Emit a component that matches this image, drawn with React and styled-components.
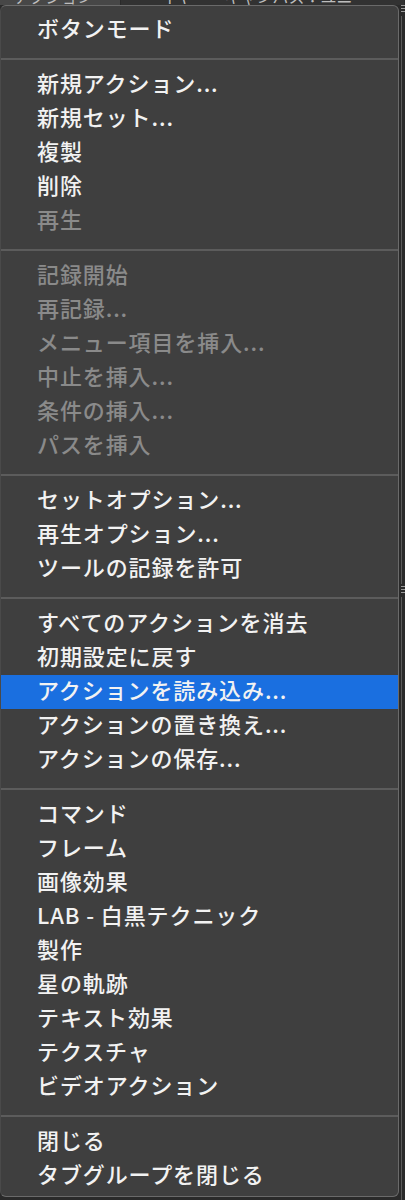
import React from 'react';
import styled, { createGlobalStyle } from 'styled-components';

const GlobalStyle = createGlobalStyle`
  html, body {
    margin: 0;
    padding: 0;
    background: #2a2a2a;
  }
  body {
    font-family: "Noto Sans CJK JP", "Noto Sans", sans-serif;
  }
`;

const Page = styled.div`
  width: 405px;
  height: 1200px;
  overflow: hidden;
  background: #2a2a2a;
  display: flex;
  flex-direction: column;
`;

const TabStrip = styled.div`
  height: 5px;
  overflow: hidden;
  display: flex;
  flex-direction: row;
  background: #323232;
`;

const Tab = styled.div`
  flex: none;
  width: ${(p) => p.width}px;
  height: 5px;
  padding-left: ${(p) => p.indent}px;
  box-sizing: border-box;
  background: ${(p) => (p.active ? '#474747' : '#323232')};
  border-right: 1px solid #2a2a2a;
  color: #bdbdbd;
  font-size: 16px;
  line-height: 16px;
  white-space: nowrap;
  overflow: hidden;
`;

const TabText = styled.div`
  margin-top: -12px;
`;

const Body = styled.div`
  flex: 1;
  display: flex;
  flex-direction: row;
`;

const Menu = styled.div`
  width: 400px;
  height: 1192px;
  box-sizing: border-box;
  background: #3f3f3f;
  border: 1px solid #6a6a6a;
  border-left-color: #4a4a4a;
  border-radius: 6px;
  padding: 7px 0 5px 0;
  display: flex;
  flex-direction: column;
  overflow: hidden;
`;

const Item = styled.div`
  flex: none;
  height: 34px;
  box-sizing: border-box;
  line-height: 29px;
  padding: 0 0 5px 36px;
  font-size: 22px;
  font-weight: 500;
  letter-spacing: 0.9px;
  white-space: nowrap;
  color: ${(p) => (p.disabled ? '#8a8a8a' : '#f2f2f2')};
  background: ${(p) => (p.active ? '#1a6fe0' : 'transparent')};
`;

const Separator = styled.div`
  flex: none;
  height: 2px;
  margin: 11px 0 8px 0;
  background: #5c5c5c;
`;

const SidePanel = styled.div`
  flex: 1;
  display: flex;
  flex-direction: column;
  align-items: flex-start;
  padding-left: 2px;
`;

const Grip = styled.div`
  flex: none;
  width: 4px;
  height: 9px;
  margin-top: ${(p) => p.top}px;
  background: repeating-linear-gradient(
    to bottom,
    #9a9a9a 0px,
    #9a9a9a 1px,
    transparent 1px,
    transparent 3px
  );
`;

const Rail = styled.div`
  width: 1px;
  flex: ${(p) => (p.grow ? 1 : 'none')};
  height: ${(p) => (p.grow ? 'auto' : `${p.size}px`)};
  margin-top: 2px;
  background: #5a5a5a;
`;

const sections = [
  [{ label: 'ボタンモード' }],
  [
    { label: '新規アクション...' },
    { label: '新規セット...' },
    { label: '複製' },
    { label: '削除' },
    { label: '再生', disabled: true },
  ],
  [
    { label: '記録開始', disabled: true },
    { label: '再記録...', disabled: true },
    { label: 'メニュー項目を挿入...', disabled: true },
    { label: '中止を挿入...', disabled: true },
    { label: '条件の挿入...', disabled: true },
    { label: 'パスを挿入', disabled: true },
  ],
  [
    { label: 'セットオプション...' },
    { label: '再生オプション...' },
    { label: 'ツールの記録を許可' },
  ],
  [
    { label: 'すべてのアクションを消去' },
    { label: '初期設定に戻す' },
    { label: 'アクションを読み込み...', active: true },
    { label: 'アクションの置き換え...' },
    { label: 'アクションの保存...' },
  ],
  [
    { label: 'コマンド' },
    { label: 'フレーム' },
    { label: '画像効果' },
    { label: 'LAB - 白黒テクニック' },
    { label: '製作' },
    { label: '星の軌跡' },
    { label: 'テキスト効果' },
    { label: 'テクスチャ' },
    { label: 'ビデオアクション' },
  ],
  [
    { label: '閉じる' },
    { label: 'タブグループを閉じる' },
  ],
];

const App = () => (
  <Page>
    <GlobalStyle />
    <TabStrip>
      <Tab width={121} indent={14} active>
        <TabText>アクション</TabText>
      </Tab>
      <Tab width={284} indent={40}>
        <TabText>イヤー　キャンバス：ユニー　　く</TabText>
      </Tab>
    </TabStrip>
    <Body>
      <Menu>
        {sections.map((group, gi) => (
          <React.Fragment key={gi}>
            {gi > 0 && <Separator />}
            {group.map((item) => (
              <Item key={item.label} disabled={item.disabled} active={item.active}>
                {item.label}
              </Item>
            ))}
          </React.Fragment>
        ))}
      </Menu>
      <SidePanel>
        <Grip top={0} />
        <Rail size={568} />
        <Grip top={2} />
        <Rail grow />
      </SidePanel>
    </Body>
  </Page>
);

export default App;
